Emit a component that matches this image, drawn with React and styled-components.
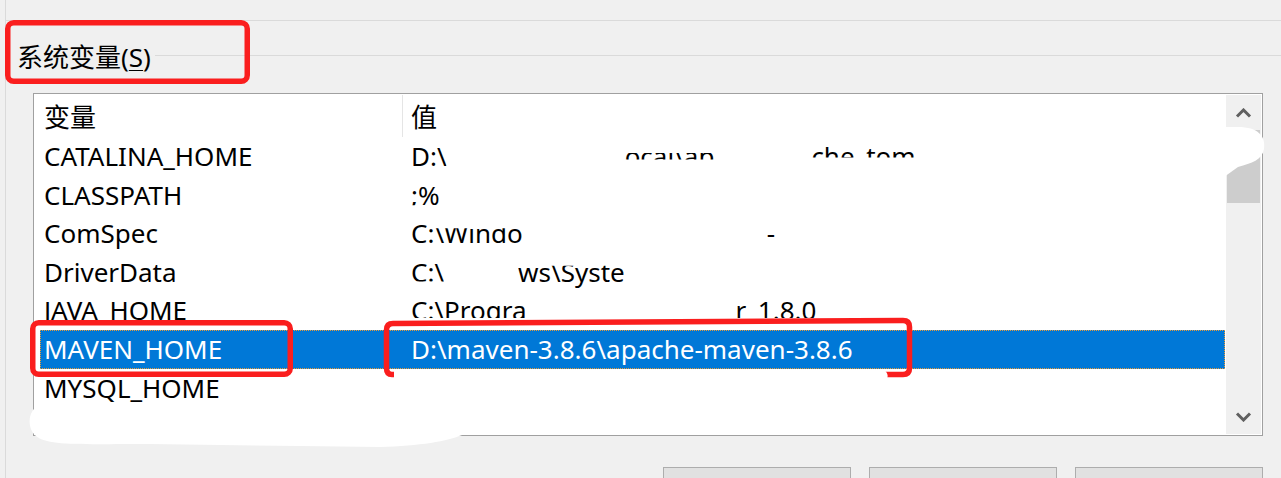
import React from 'react'
import styled, { createGlobalStyle, css } from 'styled-components'

const GlobalStyle = createGlobalStyle`
  html, body {
    margin: 0;
    padding: 0;
    background: #f0f0f0;
    overflow: hidden;
  }
`

const FONT = `"Noto Sans", "Noto Sans CJK SC", sans-serif`

const Page = styled.div`
  position: relative;
  width: 1281px;
  height: 478px;
  padding-left: 5px;
  box-sizing: border-box;
  overflow: hidden;
  background: #f0f0f0;
  color: #000;
  font-family: ${FONT};
  font-size: 26px;
`

const Frame = styled.div`
  height: 100%;
  border-left: 1px solid #dadada;
  display: flex;
  flex-direction: column;
`

const TopBand = styled.div`
  flex: none;
  height: 20px;
  border-bottom: 1px solid #dadada;
`

const GroupHead = styled.div`
  flex: none;
  height: 72px;
  display: flex;
  align-items: center;
  padding-left: 11px;
`

const GroupLabel = styled.span`
  line-height: 30px;
  white-space: nowrap;
`

const Mnemonic = styled.span`
  text-decoration: underline;
  text-decoration-thickness: 1px;
  text-underline-offset: 3px;
`

const GroupRule = styled.div`
  flex: 1;
  align-self: flex-start;
  height: 1px;
  margin: 34px 0 0 4px;
  background: #dadada;
`

const ListBox = styled.div`
  flex: none;
  display: flex;
  width: 1230px;
  height: 343px;
  margin-left: 27px;
  box-sizing: border-box;
  border: 1px solid #a0a0a0;
  background: #fff;
`

const ListBody = styled.div`
  flex: 1;
  min-width: 0;
  display: flex;
  flex-direction: column;
  overflow: hidden;
`

const HeaderRow = styled.div`
  flex: none;
  height: 43px;
  display: flex;
  padding-left: 6px;
`

const HeadCell = styled.div`
  display: flex;
  align-items: center;
  box-sizing: border-box;
  white-space: nowrap;
  ${p => p.$first ? css`
    width: 363px;
    padding-left: 4px;
    margin-top: 1px;
    border-right: 1px solid #e5e5e5;
  ` : css`
    padding-left: 8px;
  `}
`

const Row = styled.div`
  flex: none;
  height: 38.6px;
  margin: 0 1px 0 6px;
  display: flex;
  align-items: center;
  line-height: 38.6px;
  white-space: nowrap;
  background: ${p => p.$selected ? '#0078d7' : 'transparent'};
  color: ${p => p.$selected ? '#fff' : '#000'};
  outline: ${p => p.$selected ? '1px dotted #e89b3a' : 'none'};
  outline-offset: -1px;
`

const NameCell = styled.div`
  flex: none;
  width: 362px;
  padding-left: 4px;
  box-sizing: border-box;
`

const ValueCell = styled.div`
  display: flex;
  padding-left: 9px;
`

// a piece of a value string that the redaction paint left visible
const Frag = styled.span`
  display: inline-block;
  margin-left: ${p => p.$gap || 0}px;
  clip-path: inset(${p => p.$top || 0}px 0 ${p => p.$bottom || 0}px 0);
`

const ScrollBar = styled.div`
  flex: none;
  width: 35px;
  margin: 1px 1px 1px 0;
  display: flex;
  flex-direction: column;
  background: #f0f0f0;
`

const ArrowBox = styled.div`
  flex: none;
  height: 35px;
  display: flex;
  align-items: center;
  justify-content: center;
`

const Track = styled.div`
  flex: 1;
`

const Thumb = styled.div`
  height: 73px;
  margin: 0 1px;
  background: #cdcdcd;
`

const ButtonRow = styled.div`
  flex: none;
  display: flex;
  justify-content: flex-end;
  gap: 18px;
  margin-top: 31px;
  padding-right: 18px;
`

const Btn = styled.div`
  width: 188px;
  height: 40px;
  box-sizing: border-box;
  background: #e1e1e1;
  border: 1px solid #adadad;
`

const Overlay = styled.svg`
  position: absolute;
  left: 0;
  top: 0;
  pointer-events: none;
`

const Chevron = ({ dir }) => (
  <svg width="17" height="10" viewBox="0 0 17 10">
    <polyline
      points={dir === 'up' ? '2,8.5 8.5,2 15,8.5' : '2,1.5 8.5,8 15,1.5'}
      fill="none"
      stroke="#606060"
      strokeWidth="3"
    />
  </svg>
)

const rows = [
  {
    name: 'CATALINA_HOME',
    frags: [
      { t: 'D:\\' },
      { t: 'ocal\\ap', gap: 178, top: 16, bottom: 16 },
      { t: 'che_tom', gap: 97, bottom: 18 },
    ],
  },
  { name: 'CLASSPATH', frags: [{ t: ';%', top: 7, bottom: 9 }] },
  { name: 'ComSpec', frags: [{ t: 'C' }, { t: ':\\Windo', top: 14 }, { t: '-', gap: 244, top: 14 }] },
  { name: 'DriverData', frags: [{ t: 'C:\\', bottom: 10 }, { t: 'ws\\Syste', gap: 74, top: 13 }] },
  { name: 'JAVA_HOME', frags: [{ t: 'C:\\Progra', bottom: 12 }, { t: 'r_1.8.0', gap: 209, bottom: 12 }] },
  { name: 'MAVEN_HOME', frags: [{ t: 'D:\\maven-3.8.6\\apache-maven-3.8.6' }], selected: true },
  { name: 'MYSQL_HOME', frags: [] },
  { name: '', frags: [] },
]

const RED = '#fa1e1e'

export default function App() {
  return (
    <>
      <GlobalStyle />
      <Page>
        <Frame>
          <TopBand />
          <GroupHead>
            <GroupLabel>系统变量(<Mnemonic>S</Mnemonic>)</GroupLabel>
            <GroupRule />
          </GroupHead>
          <ListBox>
            <ListBody>
              <HeaderRow>
                <HeadCell $first>变量</HeadCell>
                <HeadCell>值</HeadCell>
              </HeaderRow>
              {rows.map((r, i) => (
                <Row key={i} $selected={r.selected}>
                  <NameCell>{r.name}</NameCell>
                  <ValueCell>
                    {r.frags.map((f, j) => (
                      <Frag key={j} $gap={f.gap} $top={f.top} $bottom={f.bottom}>{f.t}</Frag>
                    ))}
                  </ValueCell>
                </Row>
              ))}
            </ListBody>
            <ScrollBar>
              <ArrowBox><Chevron dir="up" /></ArrowBox>
              <Track><Thumb /></Track>
              <ArrowBox><Chevron dir="down" /></ArrowBox>
            </ScrollBar>
          </ListBox>
          <ButtonRow>
            <Btn />
            <Btn />
            <Btn />
          </ButtonRow>
        </Frame>

        {/* annotation marks and redaction paint laid over the dialog */}
        <Overlay width="1281" height="478" viewBox="0 0 1281 478">
          <rect x="7.75" y="22.75" width="239.5" height="58.5" rx="6" fill="none" stroke={RED} strokeWidth="5.5" />
          <rect x="32.75" y="322.75" width="257.5" height="51.5" rx="6" fill="none" stroke={RED} strokeWidth="5.5" />
          <path
            d="M 393 323.5 L 903 320.5 Q 909.5 320.5 909.5 327 L 909.5 368 Q 909.5 374.5 903 374.5 L 392 374.5 Q 386.5 374.5 386.5 368 L 386.5 330 Q 386.5 323.5 393 323.5 Z"
            fill="none"
            stroke={RED}
            strokeWidth="5.5"
          />
          <path d="M 1150 127 L 1238 127 C 1258 127 1266 136 1264 149 C 1262 160 1252 163 1238 167 L 1224 177 L 1150 177 Z" fill="#fff" />
          <path d="M 40 405 C 28 409 26 428 36 436 C 48 446 80 444 150 444 L 300 446 L 380 447 C 420 446 448 441 462 435 L 462 405 Z" fill="#fff" />
          <path d="M 394 369.5 L 882 369.5 C 889 371 890 380 882 384 L 394 384 Z" fill="#fff" />
        </Overlay>
      </Page>
    </>
  )
}
